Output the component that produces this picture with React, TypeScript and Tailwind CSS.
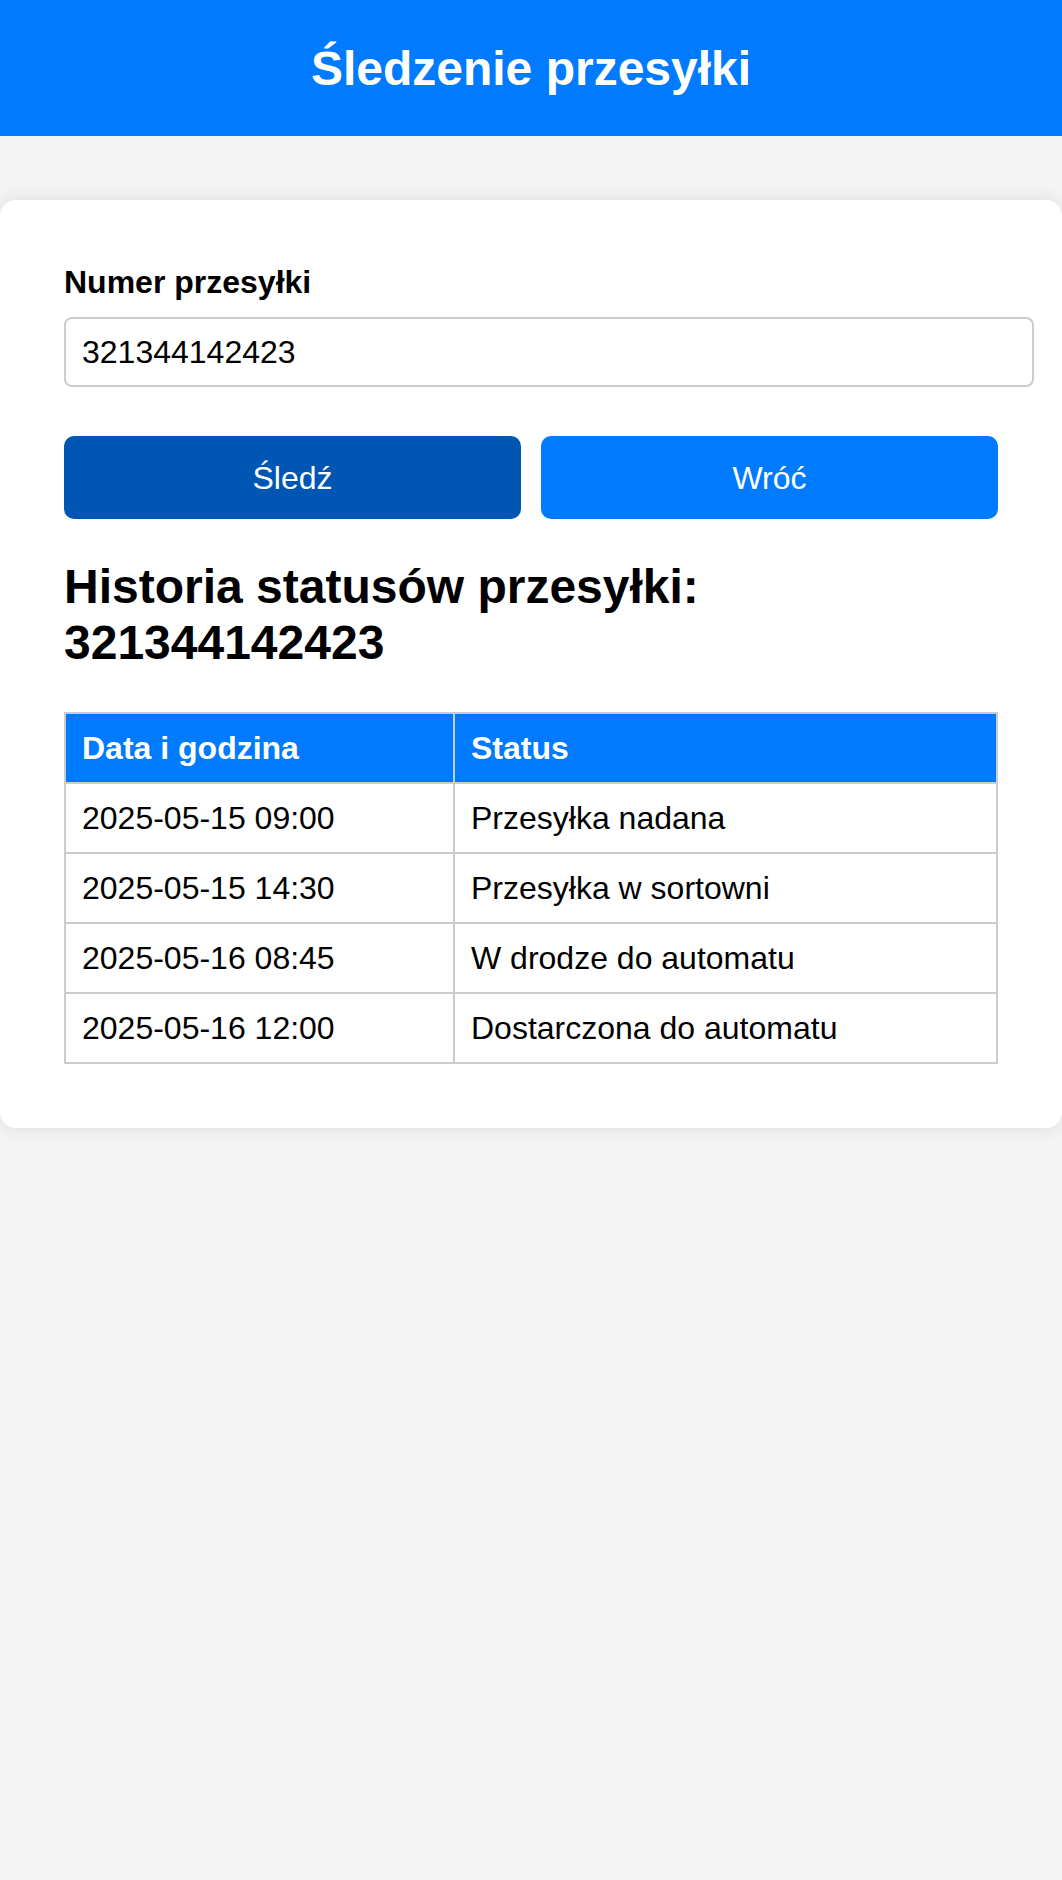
import React from "react";

const rows: [string, string][] = [
  ["2025-05-15 09:00", "Przesyłka nadana"],
  ["2025-05-15 14:30", "Przesyłka w sortowni"],
  ["2025-05-16 08:45", "W drodze do automatu"],
  ["2025-05-16 12:00", "Dostarczona do automatu"],
];

export default function App() {
  return (
    <div
      className="min-h-screen bg-[#f4f4f4] text-black"
      style={{ fontFamily: '"Liberation Sans", Arial, sans-serif' }}
    >
      <header className="h-[136px] bg-[#007bff] flex items-center justify-center">
        <h1 className="text-[48px] font-bold text-white leading-[55px] m-0">
          Śledzenie przesyłki
        </h1>
      </header>

      <main className="mt-[64px] bg-white rounded-2xl shadow-[0_0_20px_rgba(0,0,0,0.1)] px-[64px] pt-[64px] pb-[64px]">
        <label className="block text-[32px] font-bold leading-[37px]">
          Numer przesyłki
        </label>
        <input
          type="text"
          defaultValue="321344142423"
          className="block mt-[16px] box-content w-full h-[36px] py-[15px] px-4 border-2 border-[#cccccc] rounded-lg text-[32px] leading-[36px] text-black bg-white outline-none"
        />

        <div className="mt-[49px] flex gap-[20px]">
          <button className="flex-1 h-[83px] rounded-[10px] bg-[#0056b3] text-white text-[32px] flex items-center justify-center">
            Śledź
          </button>
          <button className="flex-1 h-[83px] rounded-[10px] bg-[#007bff] text-white text-[32px] flex items-center justify-center">
            Wróć
          </button>
        </div>

        <h2 className="mt-[40px] text-[48px] font-bold leading-[56px]">
          Historia statusów przesyłki: 321344142423
        </h2>

        <table className="mt-[41px] w-full border-collapse text-[32px] leading-[36px]">
          <thead>
            <tr className="bg-[#007bff] text-white">
              <th className="w-[389px] border-2 border-[#cccccc] px-4 py-4 text-left font-bold">
                Data i godzina
              </th>
              <th className="border-2 border-[#cccccc] px-4 py-4 text-left font-bold">
                Status
              </th>
            </tr>
          </thead>
          <tbody>
            {rows.map(([d, s]) => (
              <tr key={d}>
                <td className="border-2 border-[#cccccc] px-4 py-4">{d}</td>
                <td className="border-2 border-[#cccccc] px-4 py-4">{s}</td>
              </tr>
            ))}
          </tbody>
        </table>
      </main>
    </div>
  );
}
